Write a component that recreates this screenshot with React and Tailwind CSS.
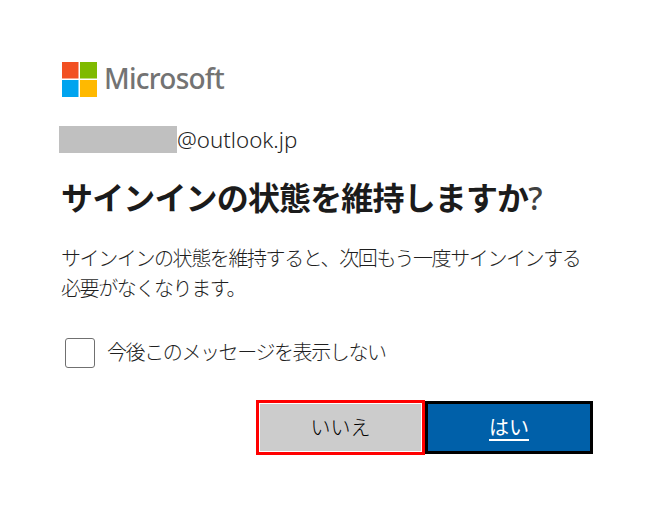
const font = { fontFamily: '"Noto Sans", "Noto Sans CJK JP", sans-serif' };

const Logo = () => (
  <div className="flex items-center gap-[8px] h-[35px] ml-[3px]">
    <svg width="35" height="35" viewBox="0 0 35 35">
      <rect x="0" y="0" width="16.5" height="16.5" fill="#f25022" />
      <rect x="18" y="0" width="17" height="16.5" fill="#7fba00" />
      <rect x="0" y="18" width="16.5" height="17" fill="#00a4ef" />
      <rect x="18" y="18" width="17" height="17" fill="#ffb900" />
    </svg>
    <span className="text-[28px] font-medium text-[#737373] tracking-[-0.75px] leading-none -mt-[3px] -ml-[1px]">Microsoft</span>
  </div>
);

export default function App() {
  return (
    <div className="w-[652px] h-[515px] bg-white pt-[62px] pl-[59px] overflow-hidden text-[#1b1b1b]" style={font}>
      <Logo />
      <div className="flex items-center mt-[29px] h-[27px]">
        <div className="w-[118px] h-[27px] bg-[#c0c0c0]" />
        <span className="text-[22.3px] font-light text-[#1f1f1f] leading-none mt-[2px]">@outlook.jp</span>
      </div>
      <h1 className="mt-[23px] ml-[2px] text-[32px] font-bold leading-[44px] whitespace-nowrap tracking-[-0.85px]">
        サインインの状態を維持しますか<span className="font-medium text-[#404040]">?</span>
      </h1>
      <p className="mt-[24px] ml-[2px] w-[525px] text-[20px] font-light leading-[30px] tracking-[-1.4px] text-[#1f1f1f]">
        サインインの状態を維持すると、次回もう一度サインインする必要がなくなります。
      </p>
      <label className="flex items-center mt-[34px] ml-[6px] h-[30px]">
        <span className="w-[30px] h-[30px] rounded-[3px] border border-[#707070] bg-white" />
        <span className="ml-[12px] text-[20px] font-light tracking-[-1.4px] text-[#1f1f1f]">今後このメッセージを表示しない</span>
      </label>
      <div className="flex items-center mt-[32px] ml-[197px]">
        <button className="w-[169px] h-[55px] border-[3px] border-[#f00] bg-[#cccccc] outline outline-1 -outline-offset-4 outline-white text-[20px] font-light text-black">
          いいえ
        </button>
        <button className="w-[168px] h-[53px] border-[3px] border-black bg-[#0060a9] text-[20px] font-normal text-white underline underline-offset-4">
          はい
        </button>
      </div>
    </div>
  );
}
